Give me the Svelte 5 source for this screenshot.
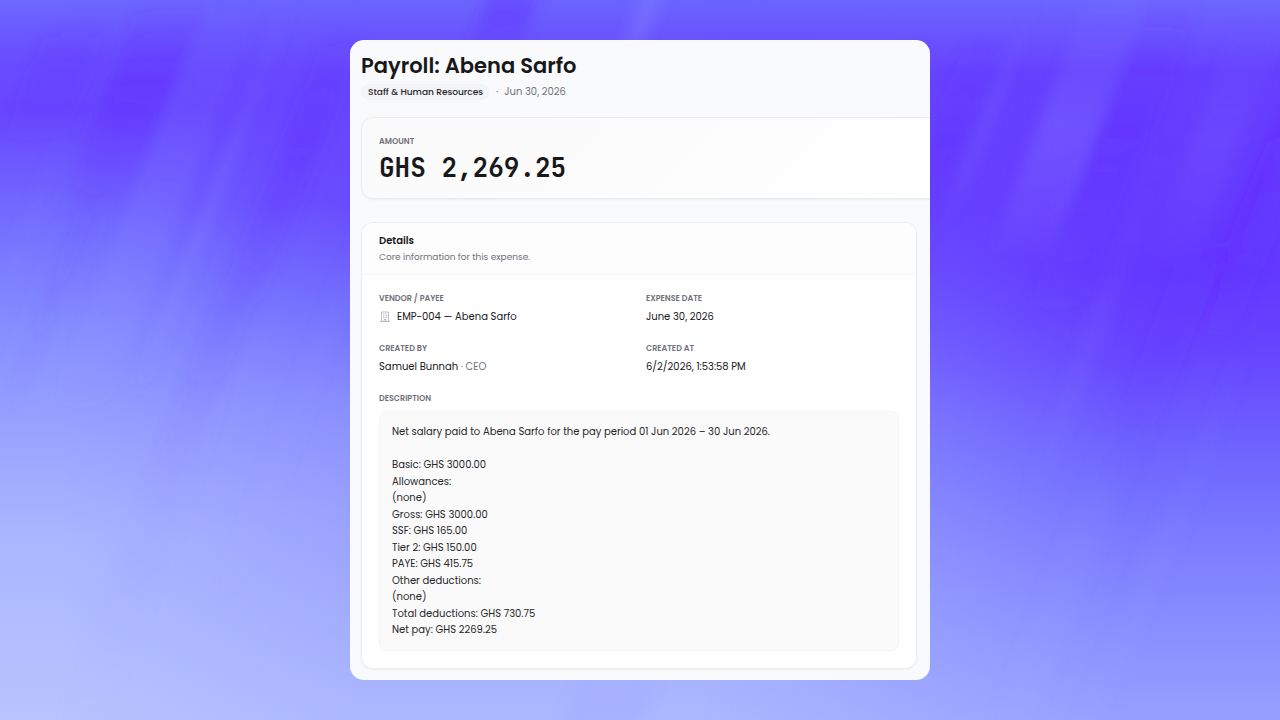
<script>
  const fields = [
    { label: 'Vendor / Payee', value: 'EMP-004 — Abena Sarfo', icon: true },
    { label: 'Expense date', value: 'June 30, 2026' },
    { label: 'Created by', value: 'Samuel Bunnah', note: 'CEO' },
    { label: 'Created at', value: '6/2/2026, 1:53:58 PM' }
  ];

  const description = `Net salary paid to Abena Sarfo for the pay period 01 Jun 2026 – 30 Jun 2026.

Basic: GHS 3000.00
Allowances:
(none)
Gross: GHS 3000.00
SSF: GHS 165.00
Tier 2: GHS 150.00
PAYE: GHS 415.75
Other deductions:
(none)
Total deductions: GHS 730.75
Net pay: GHS 2269.25`;

  // Slanted light and dark brush strokes: top x, top y, length, width, tone, strength
  const strokes = [
    [140, 0, 220, 70, 'dark', 0.5],
    [50, 20, 130, 60, 'dark', 0.25],
    [330, 20, 300, 40, 'dark', 0.35],
    [210, -10, 430, 56, 'light', 0.16],
    [290, -20, 420, 14, 'light', 0.2],
    [120, 100, 320, 16, 'dark', 0.1],
    [260, 180, 340, 40, 'dark', 0.1],
    [370, 190, 420, 22, 'light', 0.14],
    [60, 120, 380, 20, 'light', 0.1],
    [190, 380, 360, 44, 'light', 0.1],
    [510, -60, 180, 50, 'dark', 0.45],
    [670, -80, 180, 22, 'light', 0.25],
    [1090, -10, 270, 60, 'light', 0.22],
    [1035, -10, 240, 6, 'light', 0.25],
    [970, 30, 280, 40, 'dark', 0.35],
    [1145, 0, 330, 56, 'dark', 0.35],
    [1240, 10, 260, 50, 'light', 0.1],
    [1290, 80, 260, 14, 'deep', 0.4],
    [1290, 110, 250, 30, 'dark', 0.25],
    [1160, 130, 380, 24, 'light', 0.08],
    [1200, 200, 300, 44, 'dark', 0.14],
    [1120, 390, 380, 40, 'light', 0.14],
    [1170, 480, 330, 20, 'light', 0.16],
    [1240, 330, 360, 20, 'light', 0.08],
    [600, 620, 220, 80, 'light', 0.16]
  ];

  const slant = 0.38;
  const strokePath = ([x, y, length, width]) =>
    `M${x} ${y}h${width}l${-length * slant} ${length}h${-width}Z`;
</script>

<div class="stage">
  <svg class="backdrop" viewBox="0 0 1280 720" preserveAspectRatio="none" aria-hidden="true">
    <defs>
      <linearGradient id="sky-left" x1="0" y1="0" x2="0" y2="1">
        <stop offset="0" stop-color="#6e68ff" />
        <stop offset="0.07" stop-color="#6950ff" />
        <stop offset="0.15" stop-color="#6845ff" />
        <stop offset="0.25" stop-color="#6f5fff" />
        <stop offset="0.35" stop-color="#7878ff" />
        <stop offset="0.47" stop-color="#8890ff" />
        <stop offset="0.62" stop-color="#9ca6ff" />
        <stop offset="0.75" stop-color="#aab7ff" />
        <stop offset="1" stop-color="#b8c4ff" />
      </linearGradient>
      <linearGradient id="sky-middle" x1="0" y1="0" x2="0" y2="1">
        <stop offset="0" stop-color="#6c64ff" />
        <stop offset="0.1" stop-color="#6746ff" />
        <stop offset="0.28" stop-color="#6849ff" />
        <stop offset="0.42" stop-color="#726cff" />
        <stop offset="0.56" stop-color="#888dff" />
        <stop offset="0.7" stop-color="#989fff" />
        <stop offset="1" stop-color="#acb8ff" />
      </linearGradient>
      <linearGradient id="sky-right" x1="0" y1="0" x2="0" y2="1">
        <stop offset="0" stop-color="#6e67ff" />
        <stop offset="0.1" stop-color="#6640ff" />
        <stop offset="0.38" stop-color="#6438ff" />
        <stop offset="0.5" stop-color="#6747ff" />
        <stop offset="0.62" stop-color="#6e63ff" />
        <stop offset="0.76" stop-color="#7c7dff" />
        <stop offset="0.88" stop-color="#8990ff" />
        <stop offset="1" stop-color="#969fff" />
      </linearGradient>
      <linearGradient id="fade-middle" x1="0" y1="0" x2="1" y2="0">
        <stop offset="0.05" stop-color="#fff" stop-opacity="0" />
        <stop offset="0.28" stop-color="#fff" />
      </linearGradient>
      <linearGradient id="fade-right" x1="0" y1="0" x2="1" y2="0">
        <stop offset="0.55" stop-color="#fff" stop-opacity="0" />
        <stop offset="0.88" stop-color="#fff" />
      </linearGradient>
      <mask id="mask-middle"><rect width="1280" height="720" fill="url(#fade-middle)" /></mask>
      <mask id="mask-right"><rect width="1280" height="720" fill="url(#fade-right)" /></mask>
      <linearGradient id="light" x1="0" y1="0" x2="0" y2="1">
        <stop offset="0" stop-color="#8f96ff" stop-opacity="0" />
        <stop offset="0.5" stop-color="#8f96ff" />
        <stop offset="1" stop-color="#c8d2ff" stop-opacity="0" />
      </linearGradient>
      <linearGradient id="dark" x1="0" y1="0" x2="0" y2="1">
        <stop offset="0" stop-color="#612fff" stop-opacity="0" />
        <stop offset="0.4" stop-color="#612fff" />
        <stop offset="1" stop-color="#6544ff" stop-opacity="0" />
      </linearGradient>
      <linearGradient id="deep" x1="0" y1="0" x2="0" y2="1">
        <stop offset="0" stop-color="#6418ff" stop-opacity="0" />
        <stop offset="0.4" stop-color="#6418ff" />
        <stop offset="1" stop-color="#6418ff" stop-opacity="0" />
      </linearGradient>
      <filter id="soft" x="-10%" y="-10%" width="120%" height="120%">
        <feGaussianBlur stdDeviation="7 3" />
      </filter>
    </defs>
    <rect width="1280" height="720" fill="url(#sky-left)" />
    <rect width="1280" height="720" fill="url(#sky-middle)" mask="url(#mask-middle)" />
    <rect width="1280" height="720" fill="url(#sky-right)" mask="url(#mask-right)" />
    <g filter="url(#soft)">
      {#each strokes as stroke}
        <path d={strokePath(stroke)} fill={`url(#${stroke[4]})`} opacity={stroke[5]} />
      {/each}
    </g>
  </svg>

  <main class="panel">
    <header class="heading">
      <h1>Payroll: Abena Sarfo</h1>
      <div class="meta">
        <span class="pill">Staff &amp; Human Resources</span>
        <span>·</span>
        <span>Jun 30, 2026</span>
      </div>
    </header>

    <section class="amount">
      <h2 class="label">Amount</h2>
      <p>GHS 2,269.25</p>
    </section>

    <section class="details">
      <header>
        <h2>Details</h2>
        <p>Core information for this expense.</p>
      </header>
      <div class="body">
        <dl>
          {#each fields as field}
            <div class="field">
              <dt class="label">{field.label}</dt>
              <dd>
                {#if field.icon}
                  <svg class="building" viewBox="0 0 12 12" aria-hidden="true">
                    <path d="M2.5 10.5V1h7v9.5M1 10.5h10M5 10.5v-2h2v2" />
                    <path d="M4 3h1M5.5 3h1M7 3h1M4 4.8h1M5.5 4.8h1M7 4.8h1M4 6.6h1M5.5 6.6h1M7 6.6h1" />
                  </svg>
                {/if}
                <span>{field.value}{#if field.note}<span class="note">{' · '}{field.note}</span>{/if}</span>
              </dd>
            </div>
          {/each}
        </dl>
        <h3 class="label">Description</h3>
        <p class="description">{description}</p>
      </div>
    </section>
  </main>
</div>

<style>
  :global(body) {
    margin: 0;
  }

  .stage {
    display: grid;
    min-height: 100vh;
    font-family: Poppins, Inter, sans-serif;
    font-size: 10px;
    line-height: 16px;
    color: #18181b;
  }

  .backdrop,
  .panel {
    grid-area: 1 / 1;
  }

  .backdrop {
    width: 100%;
    height: 100%;
    contain: size;
  }

  h1,
  h2,
  h3,
  p,
  dl,
  dd {
    margin: 0;
  }

  .panel {
    z-index: 1;
    place-self: center;
    box-sizing: border-box;
    width: 100%;
    max-width: 580px;
    margin: 40px 0;
    padding: 11px 13px 11px 11px;
    overflow: hidden;
    border-radius: 14px;
    background: #f9fafc;
  }

  h1 {
    font-size: 21px;
    line-height: 30px;
    font-weight: 600;
  }

  .meta {
    display: flex;
    align-items: center;
    gap: 6px;
    margin-top: 3px;
    color: #71717a;
  }

  .pill {
    padding: 0 7px;
    border-radius: 8px;
    background: #f3f4f6;
    color: #27272a;
    font-size: 9px;
    font-weight: 500;
  }

  .label {
    font-size: 8px;
    line-height: 12px;
    font-weight: 600;
    text-transform: uppercase;
    color: #71717a;
  }

  .amount,
  .details {
    border: 1px solid #ebecef;
    border-radius: 12px;
    box-shadow: 0 1px 2px rgb(0 0 0 / 5%);
  }

  .amount {
    margin: 17px -40px 0 0;
    padding: 18px 17px 14px;
    background: linear-gradient(135deg, #fafafa, #fff);
  }

  .amount p {
    margin-top: 4px;
    font-family: "JetBrains Mono", "Liberation Mono", monospace;
    font-size: 26px;
    line-height: 32px;
    font-weight: 600;
  }

  .details {
    margin-top: 23px;
    overflow: hidden;
    background: #fff;
  }

  .details header {
    padding: 10px 17px 9px;
    border-bottom: 1px solid #f4f4f5;
    background: #fdfdfd;
  }

  .details h2 {
    font-size: 10px;
    font-weight: 600;
  }

  .details header p {
    font-size: 9px;
    color: #71717a;
  }

  .body {
    padding: 18px 17px 17px;
  }

  dl {
    display: grid;
    grid-template-columns: 1fr 1fr;
    gap: 18px 14px;
    margin-bottom: 18px;
  }

  dd {
    display: flex;
    align-items: center;
    gap: 6px;
    margin-top: 4px;
  }

  .building {
    width: 12px;
    height: 12px;
    fill: none;
    stroke: #a1a1aa;
    stroke-width: 0.7;
  }

  .note {
    color: #71717a;
  }

  .description {
    margin-top: 6px;
    padding: 12px 12px 11px;
    border: 1px solid #f4f4f5;
    border-radius: 8px;
    background: #fafafa;
    color: #27272a;
    line-height: 1.65;
    white-space: pre-line;
  }
</style>
